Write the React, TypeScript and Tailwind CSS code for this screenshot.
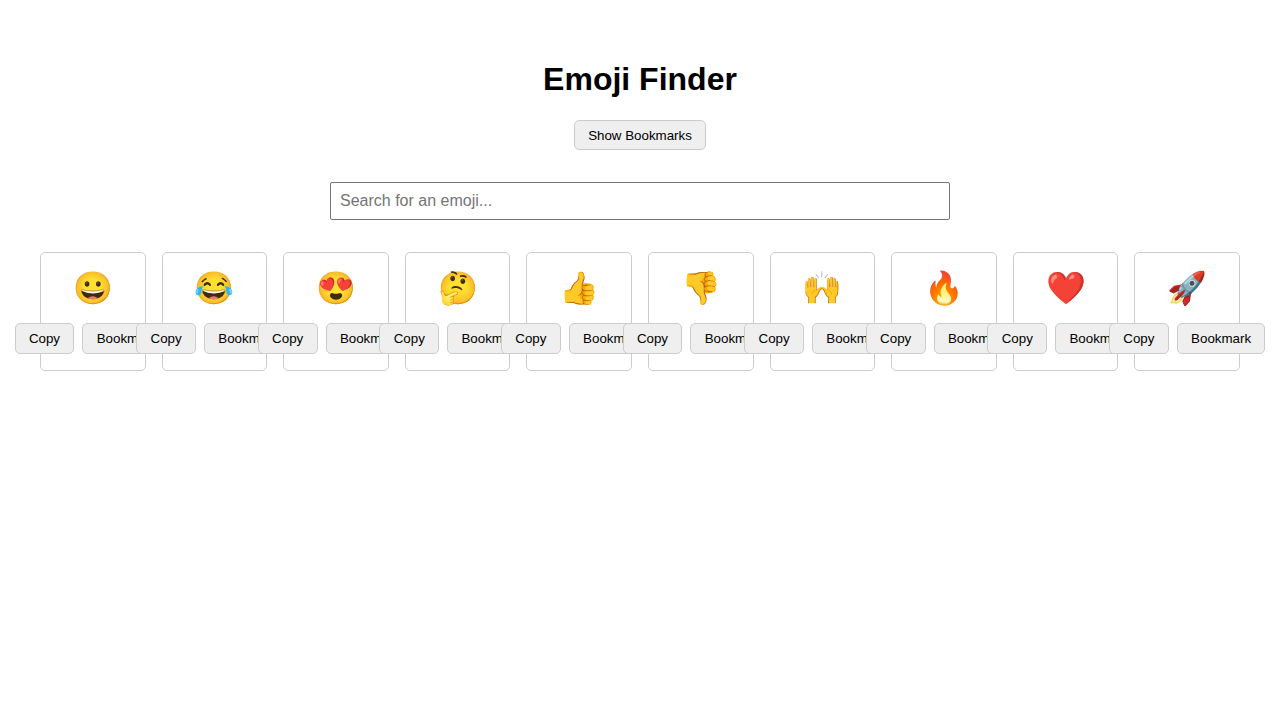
const emojis = ["😀", "😂", "😍", "🤔", "👍", "👎", "🙌", "🔥", "❤️", "🚀"];

const buttonClass =
  "shrink-0 cursor-pointer rounded-[5px] border border-[#cccccc] bg-[#efefef] px-[1em] py-[0.5em] text-[13.3333px] leading-[15px] text-black";

function EmojiCard({ emoji }: { emoji: string }) {
  return (
    <div className="flex min-w-0 flex-col items-center rounded-[5px] border border-[#cccccc] p-4">
      <span className="mb-4 text-[32px] leading-[38px]">{emoji}</span>
      <div className="flex gap-2">
        <button className={buttonClass}>Copy</button>
        <button className={buttonClass}>Bookmark</button>
      </div>
    </div>
  );
}

export default function App() {
  return (
    <div className="min-h-screen overflow-x-hidden bg-white px-10 pt-[61px] font-['Liberation_Sans',Arial,sans-serif] text-black">
      <header className="mb-8 flex flex-col items-center">
        <h1 className="mb-[22px] text-[32px] leading-[37px] font-bold">Emoji Finder</h1>
        <button className={buttonClass}>Show Bookmarks</button>
      </header>
      <div className="mb-8 flex justify-center">
        <input
          type="text"
          placeholder="Search for an emoji..."
          className="h-[38px] w-[620px] rounded-[2px] border border-[#767676] bg-white px-[9px] text-base placeholder:text-[#757575]"
        />
      </div>
      <main className="grid grid-cols-10 gap-4">
        {emojis.map((emoji) => (
          <EmojiCard key={emoji} emoji={emoji} />
        ))}
      </main>
    </div>
  );
}
